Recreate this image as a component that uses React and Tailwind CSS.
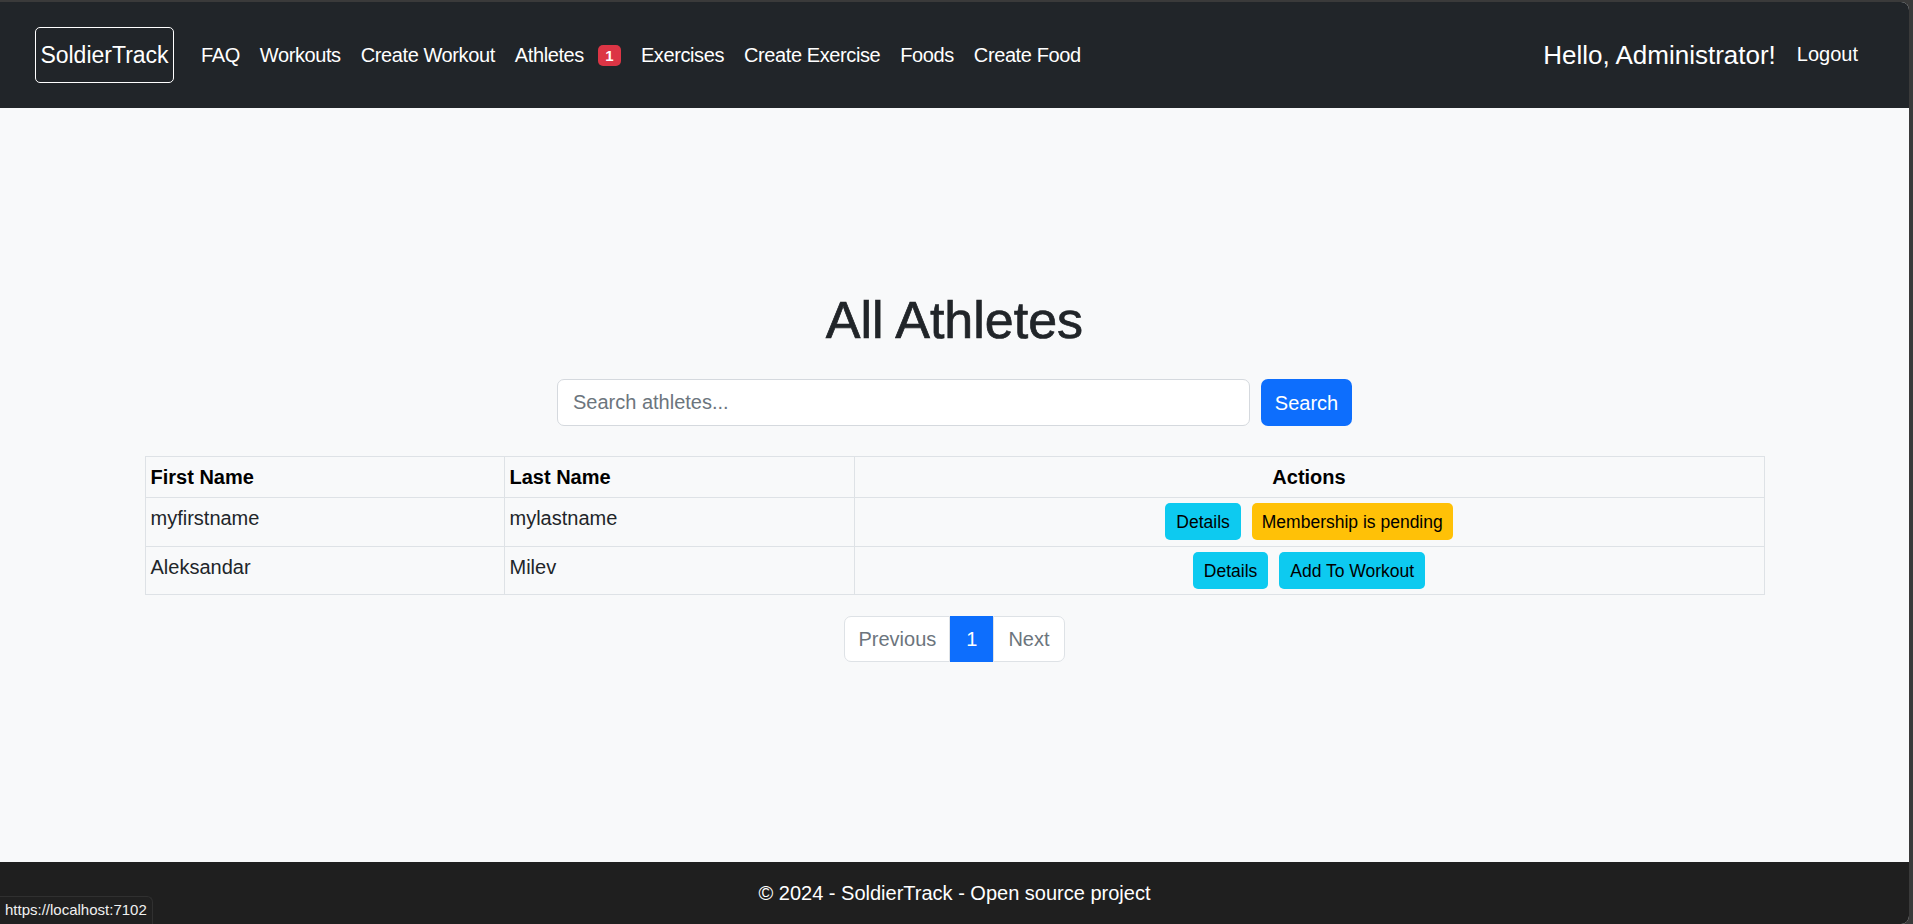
export default function App() {
  const links = ["FAQ", "Workouts", "Create Workout", "Athletes", "Exercises", "Create Exercise", "Foods", "Create Food"];
  return (
    <div className="h-[924px] w-full bg-[#3a3a3a] pt-[2px] pr-[4px] font-['Liberation_Sans',Arial,sans-serif]">
      <div className="relative flex h-full flex-col overflow-hidden rounded-tr-[8px] rounded-br-[8px] bg-[#f8f9fa]">
        <nav className="flex h-[106px] shrink-0 items-center bg-[#212529] pl-[35px] pr-[51px] text-white">
          <a className="mr-[27px] flex h-[56px] w-[139px] items-center justify-center rounded-[5px] border border-white text-[23px] leading-none">
            SoldierTrack
          </a>
          <ul className="flex items-center gap-[20px] text-[20px] leading-[30px] tracking-[-0.4px]">
            {links.map((l) => (
              <li key={l} className="flex items-center">
                <a className="whitespace-nowrap">{l}</a>
                {l === "Athletes" && (
                  <span className="ml-[14px] flex h-[21px] w-[23px] items-center justify-center rounded-[5px] bg-[#dc3545] text-[15px] font-bold leading-none tracking-normal">
                    1
                  </span>
                )}
              </li>
            ))}
          </ul>
          <div className="ml-auto flex items-center gap-[21px]">
            <span className="text-[26px] leading-[30px]">Hello, Administrator!</span>
            <a className="-mt-[3px] text-[20px] leading-[30px]">Logout</a>
          </div>
        </nav>

        <main className="flex flex-1 flex-col items-center pt-[181px] text-[#212529]">
          <h1 className="text-[52px] leading-[62px] font-medium [-webkit-text-stroke:0.7px_#212529]">All Athletes</h1>
          <form className="mt-[28px] flex items-center gap-[11px]">
            <input
              type="text"
              placeholder="Search athletes..."
              className="h-[47px] w-[693px] rounded-[7px] border border-[#d5d9de] bg-white px-[15px] text-[20px] text-[#212529] placeholder:text-[#6c757d] outline-none"
            />
            <button type="button" className="h-[47px] w-[91px] rounded-[7px] bg-[#0d6efd] text-[20px] text-white">
              Search
            </button>
          </form>

          <table className="mt-[30px] w-[1620px] table-fixed border-collapse text-[20px] leading-[30px]">
            <thead>
              <tr>
                <th className="w-[359px] border border-[#dee2e6] px-[5px] py-[5px] text-left font-bold text-black">First Name</th>
                <th className="w-[350px] border border-[#dee2e6] px-[5px] py-[5px] text-left font-bold text-black">Last Name</th>
                <th className="border border-[#dee2e6] px-[5px] py-[5px] text-center font-bold text-black">Actions</th>
              </tr>
            </thead>
            <tbody>
              <tr>
                <td className="border border-[#dee2e6] px-[5px] pt-[5px] pb-[6px] align-top">myfirstname</td>
                <td className="border border-[#dee2e6] px-[5px] pt-[5px] pb-[6px] align-top">mylastname</td>
                <td className="border border-[#dee2e6] px-[5px] pt-[5px] pb-[6px]">
                  <div className="flex justify-center gap-[11px]">
                    <button className="h-[37px] rounded-[5px] bg-[#0dcaf0] px-[11px] text-[17.5px] text-black">Details</button>
                    <button className="h-[37px] rounded-[5px] bg-[#ffc107] px-[10px] text-[17.5px] text-black">Membership is pending</button>
                  </div>
                </td>
              </tr>
              <tr>
                <td className="border border-[#dee2e6] px-[5px] pt-[5px] pb-[5px] align-top">Aleksandar</td>
                <td className="border border-[#dee2e6] px-[5px] pt-[5px] pb-[5px] align-top">Milev</td>
                <td className="border border-[#dee2e6] px-[5px] pt-[5px] pb-[5px]">
                  <div className="flex justify-center gap-[11px]">
                    <button className="h-[37px] rounded-[5px] bg-[#0dcaf0] px-[11px] text-[17.5px] text-black">Details</button>
                    <button className="h-[37px] rounded-[5px] bg-[#0dcaf0] px-[11px] text-[17.5px] text-black">Add To Workout</button>
                  </div>
                </td>
              </tr>
            </tbody>
          </table>

          <ul className="mt-[21px] flex text-[20px] leading-[30px]">
            <li className="rounded-l-[7px] border border-[#dee2e6] bg-white px-[13px] py-[7px] text-[#6c757d]">Previous</li>
            <li className="border border-[#0d6efd] bg-[#0d6efd] px-[15px] py-[7px] text-white">1</li>
            <li className="rounded-r-[7px] border border-[#dee2e6] bg-white px-[14px] py-[7px] text-[#6c757d]">Next</li>
          </ul>
        </main>

        <footer className="flex h-[62px] shrink-0 items-center justify-center bg-[#1f1f1f] text-[20px] text-white">
          © 2024 - SoldierTrack - Open source project
        </footer>

        <div className="absolute bottom-0 left-0 flex h-[28px] items-center rounded-tr-[6px] border-t border-r border-[#303030] bg-[#202020] px-[5px] text-[15px] text-[#f0f0f0]">
          https://localhost:7102
        </div>
      </div>
    </div>
  );
}
